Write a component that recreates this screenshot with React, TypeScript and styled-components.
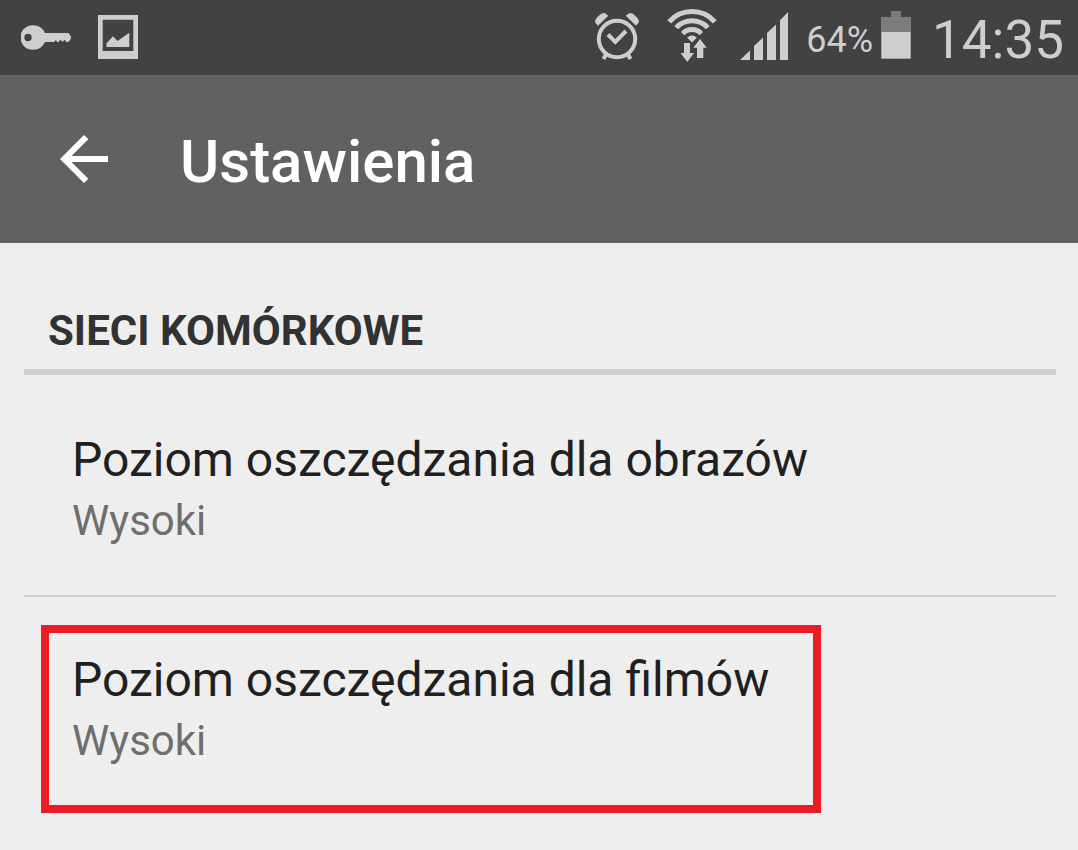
import React from "react";
import styled, { createGlobalStyle } from "styled-components";

const GlobalStyle = createGlobalStyle`
  *, *::before, *::after { box-sizing: border-box; }
  body {
    margin: 0;
    background: #eeeeee;
    font-family: Roboto, "Noto Sans", sans-serif;
  }
  h1, h2, ul { margin: 0; padding: 0; }
`;

const StatusBar = styled.div`
  display: flex;
  align-items: center;
  justify-content: space-between;
  height: 75px;
  padding: 0 14px 0 20px;
  background: #424242;
  color: #cecece;
`;

const StatusGroup = styled.div<{ $gap: number }>`
  display: flex;
  align-items: center;
  gap: ${(p) => p.$gap}px;
`;

const StatusIcon = styled.svg`
  display: block;
  flex: none;
  fill: currentColor;
`;

const BatteryLevel = styled.span`
  padding-top: 4px;
  font-size: 36px;
  line-height: 42px;
`;

const Clock = styled.time`
  padding: 4px 0 0 3px;
  font-size: 53px;
  font-weight: 400;
  line-height: 66px;
`;

const AppBar = styled.header`
  display: flex;
  align-items: center;
  gap: 60px;
  height: 168px;
  padding: 0 48px;
  background: #616161;
  color: #ffffff;
`;

const BackButton = styled.button`
  display: grid;
  place-items: center;
  width: 72px;
  height: 72px;
  padding: 0;
  border: 0;
  background: none;
  color: inherit;
  cursor: pointer;
`;

const Title = styled.h1`
  padding-top: 6px;
  font-size: 60px;
  font-weight: 500;
  line-height: 72px;
`;

const Settings = styled.main`
  padding: 0 22px 0 24px;
`;

const SectionTitle = styled.h2`
  padding: 63px 24px 13px;
  border-bottom: 6px solid #d0d0d0;
  color: #323232;
  font-size: 42px;
  font-weight: 700;
  line-height: 50px;
`;

const SettingsList = styled.ul`
  padding-top: 2px;
  list-style: none;
`;

const SettingItem = styled.li`
  &:not(:last-child) {
    border-bottom: 2px solid #d0d0d0;
  }
`;

const SettingButton = styled.button`
  display: block;
  width: 100%;
  padding: 51px 48px 45px;
  border: 0;
  background: none;
  font-family: inherit;
  text-align: left;
  cursor: pointer;
`;

const SettingText = styled.span<{ $marked?: boolean }>`
  display: flex;
  flex-direction: column;
  position: relative;
  width: fit-content;

  &::after {
    content: "";
    display: ${(p) => (p.$marked ? "block" : "none")};
    position: absolute;
    inset: -23px -52px -43px -31px;
    border: 8px solid #ed1c24;
    pointer-events: none;
  }
`;

const SettingName = styled.span`
  color: #202020;
  font-size: 48px;
  line-height: 64px;
`;

const SettingValue = styled.span`
  color: #6e6e6e;
  font-size: 42px;
  line-height: 58px;
`;

const settings = [
  { name: "Poziom oszczędzania dla obrazów", value: "Wysoki" },
  { name: "Poziom oszczędzania dla filmów", value: "Wysoki", marked: true },
];

const KeyIcon = () => (
  <StatusIcon width="52" height="59" viewBox="20 8 52 59" aria-hidden="true">
    <path
      fillRule="evenodd"
      d="M21 33.5A13 13 0 0 1 45 33H68.5L71 36.5V38.5L68.5 42H66.5L64.5 39.8L62.5 42L60.5 39.8L58.5 42H57L56 40L54 42H45A13 13 0 0 1 21 41.5ZM28 33.8a3.7 3.7 0 1 0 0 7.4a3.7 3.7 0 1 0 0-7.4Z"
    />
  </StatusIcon>
);

const PictureIcon = () => (
  <StatusIcon width="40" height="59" viewBox="98 8 40 59" aria-hidden="true">
    <path
      fillRule="evenodd"
      d="M98 15H138V59H98ZM102.7 19.7V51H133.3V19.7ZM106.5 47V43.3L113 36.3L117.5 41L129.3 32.7V47Z"
    />
  </StatusIcon>
);

const AlarmIcon = () => (
  <StatusIcon width="48" height="59" viewBox="595 8 48 59" aria-hidden="true">
    <g fill="none" stroke="currentColor" strokeWidth="4">
      <circle cx="618" cy="39" r="18.2" />
      <path d="M609 34.5L616.3 41.8L627 31" />
      <path d="M607.5 53.5L604.5 59M628.5 53.5L631.5 59" />
    </g>
    <path d="M599 25.8L596.4 22.8Q595.2 20 599 16.4Q602.6 12.6 606 13.2L609.3 15.8Z" />
    <path d="M637 25.8L639.6 22.8Q640.8 20 637 16.4Q633.4 12.6 630 13.2L626.7 15.8Z" />
  </StatusIcon>
);

const WifiIcon = () => (
  <StatusIcon width="52" height="59" viewBox="666 8 52 59" aria-hidden="true">
    <g fill="none" stroke="currentColor" strokeWidth="5">
      <path d="M670.2 21.8A30.5 30.5 0 0 1 715.8 21.8" />
      <path d="M677.2 27.6A21.5 21.5 0 0 1 708.8 27.6" />
      <path d="M683.7 33.7A12.5 12.5 0 0 1 702.3 33.7" />
    </g>
    <path d="M693 42.5L688.2 37.7A6.5 6.5 0 0 1 697.8 37.7Z" />
    <path d="M685 43H691V53H695L688.3 62L681.5 53H685Z" />
    <path d="M698 58V47.7H694.3L701 39L707.8 47.7H704.3V58Z" />
  </StatusIcon>
);

const SignalIcon = () => (
  <StatusIcon width="48" height="59" viewBox="741 8 48 59" aria-hidden="true">
    <path d="M741 60L751 50.5V60ZM755 60V46L764 37.5V60ZM768 60V33L777 24.5V60ZM781 60V20.3L789 12V60Z" />
  </StatusIcon>
);

const BatteryIcon = () => (
  <StatusIcon width="30" height="59" viewBox="882 8 30 59" aria-hidden="true">
    <path fill="#7b7b7b" d="M892 11H902V17H912V59H882V17H892Z" />
    <path d="M882.5 32H911.5V58.5H882.5Z" />
  </StatusIcon>
);

export default function App() {
  return (
    <>
      <GlobalStyle />
      <StatusBar>
        <StatusGroup $gap={26}>
          <KeyIcon />
          <PictureIcon />
        </StatusGroup>
        <StatusGroup $gap={18}>
          <StatusGroup $gap={23}>
            <AlarmIcon />
            <WifiIcon />
            <SignalIcon />
          </StatusGroup>
          <StatusGroup $gap={8}>
            <BatteryLevel>64%</BatteryLevel>
            <BatteryIcon />
          </StatusGroup>
          <Clock>14:35</Clock>
        </StatusGroup>
      </StatusBar>
      <AppBar>
        <BackButton type="button" aria-label="Wstecz">
          <svg width="48" height="48" viewBox="0 0 48 48" aria-hidden="true">
            <path
              fill="currentColor"
              d="M48 21V27H11.5L28.3 43.8L24 48L0 24L24 0L28.3 4.2L11.5 21Z"
            />
          </svg>
        </BackButton>
        <Title>Ustawienia</Title>
      </AppBar>
      <Settings>
        <SectionTitle>SIECI KOMÓRKOWE</SectionTitle>
        <SettingsList>
          {settings.map((s) => (
            <SettingItem key={s.name}>
              <SettingButton type="button">
                <SettingText $marked={s.marked}>
                  <SettingName>{s.name}</SettingName>
                  <SettingValue>{s.value}</SettingValue>
                </SettingText>
              </SettingButton>
            </SettingItem>
          ))}
        </SettingsList>
      </Settings>
    </>
  );
}
